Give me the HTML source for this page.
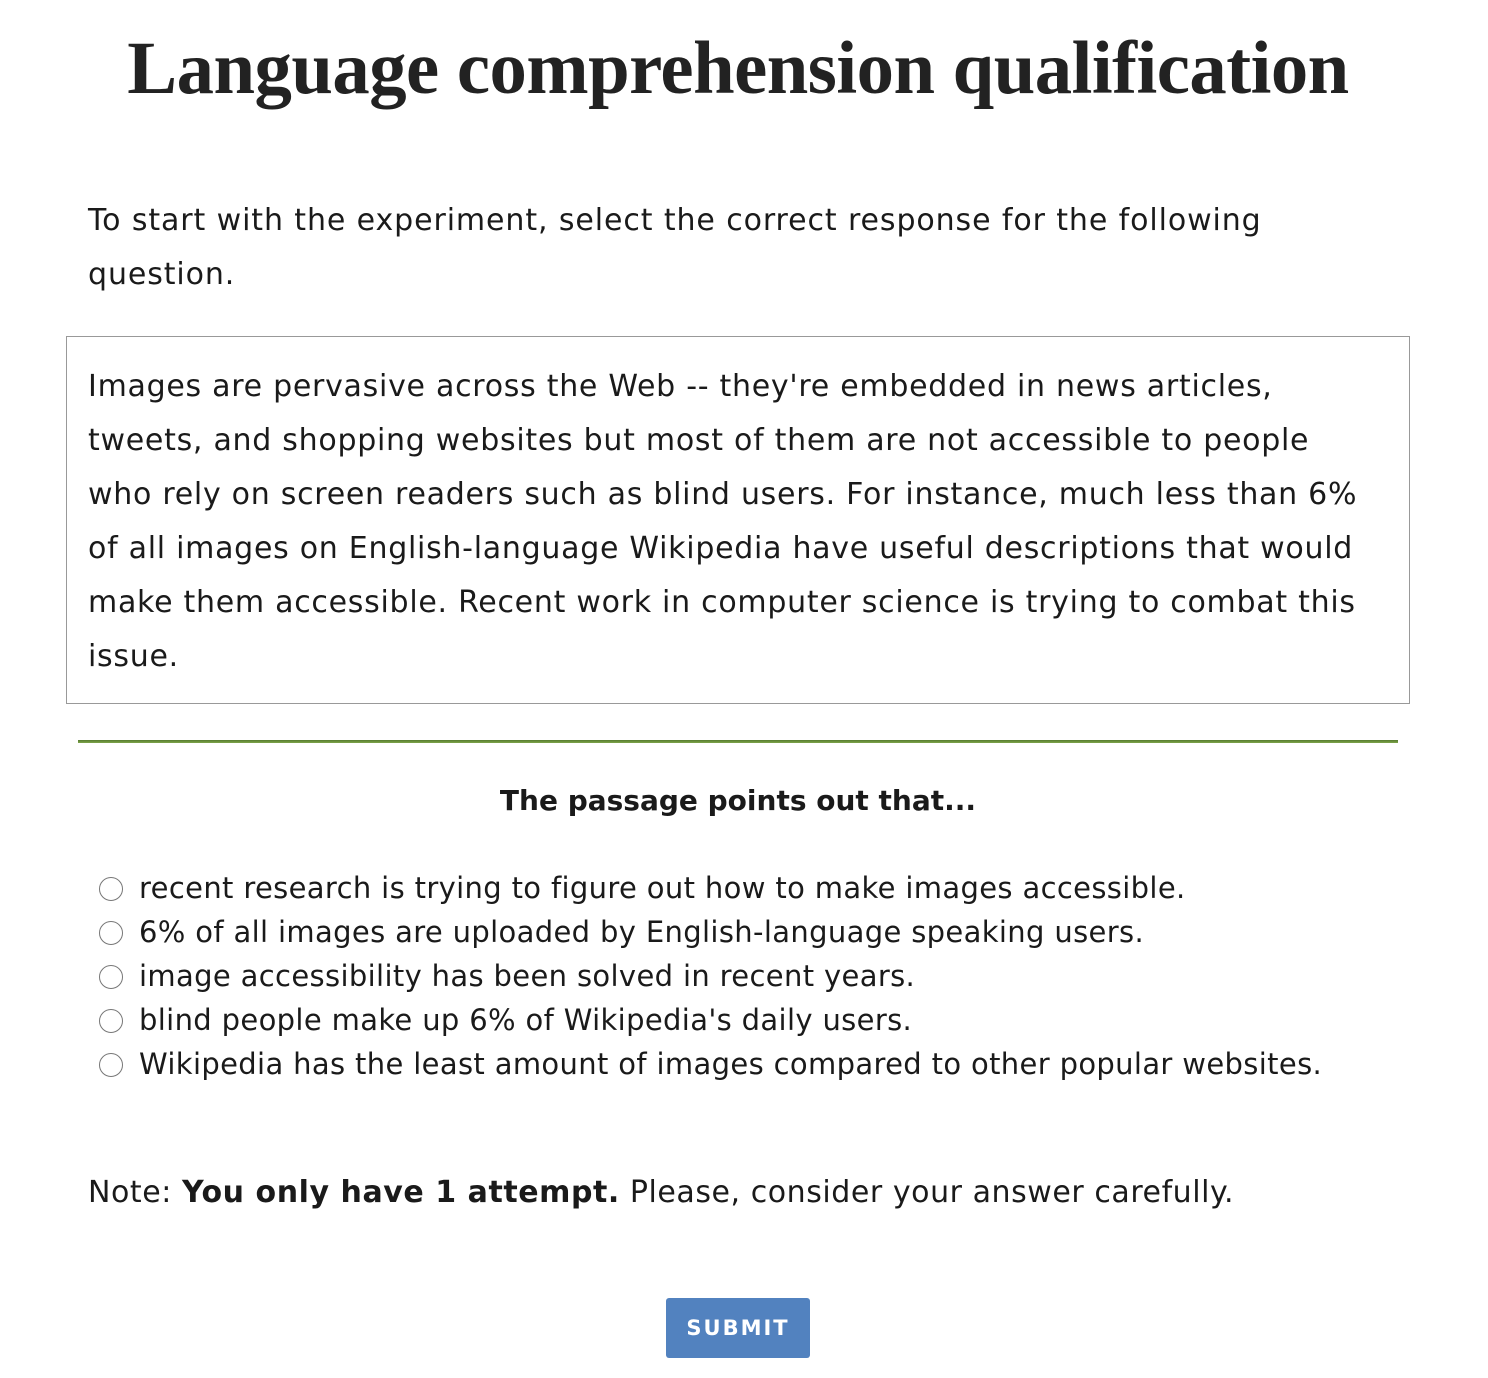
<!DOCTYPE html>
<html><head><meta charset="utf-8"><style>
body{margin:0;width:1488px;height:1378px;background:#fff;font-family:"DejaVu Sans",sans-serif;color:#1a1a1a;position:relative;overflow:hidden}
.a{position:absolute;white-space:nowrap}
h1{position:absolute;left:0;width:1476px;top:24px;margin:0;text-align:center;font-family:"Liberation Serif",serif;font-weight:bold;font-size:74.7px;line-height:90px;color:#222;letter-spacing:-0.5px}
.p{font-size:30px;line-height:54px;left:88px;letter-spacing:0.9px}
.box{position:absolute;left:66px;top:336px;width:1344px;height:368px;border:1.5px solid #999;box-sizing:border-box}
.hr{position:absolute;left:78px;top:740px;width:1320px;height:3px;background:linear-gradient(#557a2e,#7ea64a)}
.q{font-size:28px;font-weight:bold;left:0;width:1476px;text-align:center;top:784px}
.o{font-size:29px;left:139px;letter-spacing:0.35px}
.r{position:absolute;left:99px;width:24px;height:24px;border:1.5px solid #777;border-radius:50%;box-sizing:border-box}
.btn{position:absolute;left:666px;top:1298px;width:144px;height:60px;background:#5282bf;border-radius:3px;color:#fff;font-weight:bold;font-size:21px;letter-spacing:2px;text-align:center;line-height:60px}
</style></head><body>
<h1>Language comprehension qualification</h1>
<div class="a p" style="top:194px">To start with the experiment, select the correct response for the following<br>question.</div>
<div class="box"></div>
<div class="a p" style="top:360px;letter-spacing:0.72px">Images are pervasive across the Web -- they're embedded in news articles,<br>tweets, and shopping websites but most of them are not accessible to people<br>who rely on screen readers such as blind users. For instance, much less than 6%<br>of all images on English-language Wikipedia have useful descriptions that would<br>make them accessible. Recent work in computer science is trying to combat this<br>issue.</div>
<div class="hr"></div>
<div class="a q">The passage points out that...</div>
<div class="r" style="top:877px"></div><div class="a o" style="top:871px">recent research is trying to figure out how to make images accessible.</div>
<div class="r" style="top:921px"></div><div class="a o" style="top:915px">6% of all images are uploaded by English-language speaking users.</div>
<div class="r" style="top:965px"></div><div class="a o" style="top:959px">image accessibility has been solved in recent years.</div>
<div class="r" style="top:1009px"></div><div class="a o" style="top:1003px">blind people make up 6% of Wikipedia's daily users.</div>
<div class="r" style="top:1053px"></div><div class="a o" style="top:1047px">Wikipedia has the least amount of images compared to other popular websites.</div>
<div class="a p" style="top:1166px;letter-spacing:0.55px">Note: <b>You only have 1 attempt.</b> Please, consider your answer carefully.</div>
<div class="btn">SUBMIT</div>
</body></html>
